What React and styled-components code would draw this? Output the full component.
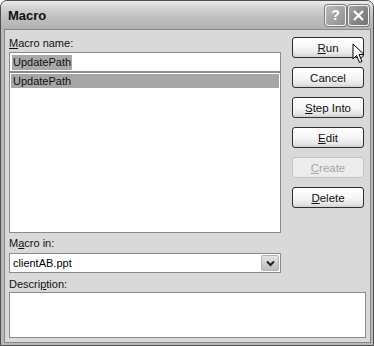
import React from 'react'
import styled, { createGlobalStyle } from 'styled-components'

const GlobalStyle = createGlobalStyle`
  html, body {
    margin: 0;
    padding: 0;
    background: #ffffff;
  }
  body {
    font-family: 'Liberation Sans', Arial, sans-serif;
    font-size: 11px;
    color: #000;
  }
`

const Window = styled.div`
  position: relative;
  box-sizing: border-box;
  width: 374px;
  height: 346px;
  display: flex;
  flex-direction: column;
  border: 1px solid #4e4e4e;
  border-radius: 7px 7px 0 0;
  background: #b8b8b8;
  overflow: hidden;
`

const TitleBar = styled.div`
  height: 28px;
  flex: none;
  display: flex;
  align-items: center;
  padding: 0 4px 0 7px;
  background: linear-gradient(#ececec 0%, #d2d2d2 25%, #bfbfbf 60%, #b3b3b3 100%);
`

const Title = styled.div`
  flex: 1;
  font-family: 'Liberation Sans', Arial, sans-serif;
  font-weight: bold;
  font-size: 13px;
  color: #111;
  padding-top: 1px;
`

const CaptionButton = styled.div`
  box-sizing: border-box;
  width: 21px;
  height: 21px;
  margin-left: 2px;
  border: 1px solid #f4f4f4;
  border-radius: 3px;
  display: flex;
  align-items: center;
  justify-content: center;
  background: ${p => p.$dark
    ? 'linear-gradient(135deg, #a4a4a4, #727272)'
    : 'linear-gradient(135deg, #bcbcbc, #8e8e8e)'};
  color: #fff;
  font-weight: bold;
  font-size: 14px;
  box-shadow: 0 0 0 1px #7c7c7c;
`

const Body = styled.div`
  flex: 1;
  margin: 0 2px 2px 3px;
  border: 1px solid #888;
  background: #d9d9d9;
  padding: 7px 2px 3px 4px;
  display: flex;
  flex-direction: column;
`

const Top = styled.div`
  display: flex;
  gap: 11px;
`

const LeftCol = styled.div`
  width: 272px;
  display: flex;
  flex-direction: column;
`

const RightCol = styled.div`
  width: 72px;
  display: flex;
  flex-direction: column;
  gap: 9px;
  padding-top: 0;
`

const Label = styled.div`
  height: 13px;
  line-height: 13px;
  margin-bottom: ${p => p.$mb || 2}px;
  margin-top: ${p => p.$mt || 0}px;
  color: #111;
  white-space: nowrap;

  u {
    text-decoration: underline;
  }
`

const Field = styled.div`
  box-sizing: border-box;
  height: 20px;
  border: 1px solid #8c8c8c;
  background: #fff;
  display: flex;
  align-items: center;
  padding: 0 2px;
`

const Selected = styled.span`
  background: #a9a9a9;
  color: #111;
  padding: 1px 1px;
  line-height: 13px;
`

const List = styled.div`
  box-sizing: border-box;
  height: 161px;
  margin-top: 0;
  border: 1px solid #8c8c8c;
  background: #fff;
  padding: 1px;
`

const ListItem = styled.div`
  height: 14px;
  line-height: 14px;
  padding-left: 2px;
  background: ${p => (p.$selected ? '#a5a5a5' : 'transparent')};
  color: #111;
`

const Combo = styled(Field)`
  justify-content: space-between;
  padding: 0 1px 0 3px;
`

const DropButton = styled.div`
  box-sizing: border-box;
  width: 18px;
  height: 16px;
  border: 1px solid #b4b4b4;
  border-radius: 2px;
  background: linear-gradient(#e4e4e4, #bdbdbd);
  display: flex;
  align-items: center;
  justify-content: center;
`

const Button = styled.div`
  box-sizing: border-box;
  height: 21px;
  border: 1px solid ${p => (p.$disabled ? '#c4c4c4' : '#2e2e2e')};
  border-radius: 3px;
  background: ${p => p.$disabled
    ? '#ececec'
    : 'linear-gradient(#ffffff 0%, #f6f6f6 50%, #e4e4e4 85%, #d0d0d0 100%)'};
  color: ${p => (p.$disabled ? '#a6a6a6' : '#111')};
  display: flex;
  align-items: center;
  justify-content: center;
  font-size: 11.5px;
`

const Description = styled.div`
  box-sizing: border-box;
  width: 357px;
  height: 46px;
  border: 1px solid #8c8c8c;
  background: #fff;
`

const Cursor = styled.svg`
  position: absolute;
  left: 351px;
  top: 42px;
`

export default function App() {
  return (
    <>
      <GlobalStyle />
      <Window>
        <TitleBar>
          <Title>Macro</Title>
          <CaptionButton>?</CaptionButton>
          <CaptionButton $dark>
            <svg width="13" height="13" viewBox="0 0 13 13">
              <path d="M2 2 L11 11 M11 2 L2 11" stroke="#fff" strokeWidth="2.2" />
            </svg>
          </CaptionButton>
        </TitleBar>
        <Body>
          <Top>
            <LeftCol>
              <Label><u>M</u>acro name:</Label>
              <Field>
                <Selected>UpdatePath</Selected>
              </Field>
              <List>
                <ListItem $selected>UpdatePath</ListItem>
              </List>
              <Label $mt={4} $mb={3}>M<u>a</u>cro in:</Label>
              <Combo>
                <span>clientAB.ppt</span>
                <DropButton>
                  <svg width="9" height="7" viewBox="0 0 9 7">
                    <path d="M1 1.5 L4.5 5 L8 1.5" fill="none" stroke="#222" strokeWidth="2" />
                  </svg>
                </DropButton>
              </Combo>
            </LeftCol>
            <RightCol>
              <Button><u>R</u>un</Button>
              <Button>Cancel</Button>
              <Button><u>S</u>tep Into</Button>
              <Button><u>E</u>dit</Button>
              <Button $disabled><u>C</u>reate</Button>
              <Button><u>D</u>elete</Button>
            </RightCol>
          </Top>
          <Label $mt={5} $mb={1}>Descri<u>p</u>tion:</Label>
          <Description />
        </Body>
        <Cursor width="14" height="22" viewBox="0 0 14 22">
          <path d="M1 1 L1 16 L4.5 12.5 L7.5 19.5 L10 18.5 L7 11.5 L12 11.5 Z" fill="#fff" stroke="#000" strokeWidth="1" strokeLinejoin="round" />
        </Cursor>
      </Window>
    </>
  )
}
